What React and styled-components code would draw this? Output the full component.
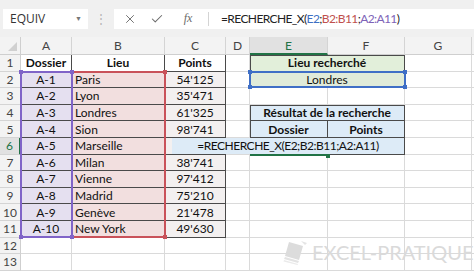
import React from 'react';
import styled, { createGlobalStyle } from 'styled-components';
import { X, Check } from 'lucide-react';

const GlobalStyle = createGlobalStyle`
  html, body { margin: 0; padding: 0; background: #fff; }
  body { width: 474px; height: 273px; overflow: hidden; font-family: Lato, "Liberation Sans", sans-serif; }
`;

const LETTERS = ['A', 'B', 'C', 'D', 'E', 'F', 'G', 'H'];
const ROWS = 13;
const DARK = '#4a4a4a';
const GRID = '#dadada';

const people = [
  ['A-1', 'Paris', "54'125"],
  ['A-2', 'Lyon', "35'471"],
  ['A-3', 'Londres', "61'325"],
  ['A-4', 'Sion', "98'741"],
  ['A-5', 'Marseille', ''],
  ['A-6', 'Milan', "38'741"],
  ['A-7', 'Vienne', "97'412"],
  ['A-8', 'Madrid', "75'210"],
  ['A-9', 'Genève', "21'478"],
  ['A-10', 'New York', "49'630"],
];

const Page = styled.div`
  position: relative;
  width: 474px;
  height: 273px;
  overflow: hidden;
`;

const Toolbar = styled.div`
  display: flex;
  align-items: center;
  height: 37px;
  padding-left: 3px;
  background: #f0f0f0;
  box-sizing: border-box;
`;

const NameBox = styled.div`
  display: flex;
  align-items: center;
  justify-content: space-between;
  width: 85px;
  height: 20px;
  padding: 0 6px 0 7px;
  box-sizing: border-box;
  background: #fff;
  font-family: "Open Sans", "Liberation Sans", sans-serif;
  font-size: 12px;
  color: #333;
`;

const Caret = styled.span`
  font-size: 7px;
  color: #777;
`;

const Dots = styled.div`
  width: 26px;
  text-align: center;
  color: #b5b5b5;
  font-size: 12px;
`;

const FormulaBox = styled.div`
  flex: 1;
  display: flex;
  align-items: center;
  height: 20px;
  background: #fff;
`;

const IconSlot = styled.div`
  width: ${p => p.$w}px;
  display: flex;
  justify-content: center;
  align-items: center;
  color: #6b6b6b;
`;

const Fx = styled.span`
  font-family: "Liberation Serif", serif;
  font-style: italic;
  font-size: 12px;
  color: #6b6b6b;
`;

const Divider = styled.div`
  width: 1px;
  height: 14px;
  background: #d4d4d4;
  margin: 0 12px 0 0;
`;

const Formula = styled.div`
  font-size: 12px;
  letter-spacing: -0.6px;
  color: #222;
  white-space: nowrap;
`;

const Ref = styled.span`
  color: ${p => p.$c};
`;

const Sheet = styled.div`
  display: grid;
  grid-template-columns: 21px 51px 93px 61px 24px 78px 77px 67px 10px;
  grid-template-rows: 18px repeat(${ROWS}, 16.6px);
  background: #fff;
`;

const Corner = styled.div`
  grid-row: 1;
  grid-column: 1;
  background: #f3f3f3;
  border-right: 1px solid #cfcfcf;
  border-bottom: 1px solid #cfcfcf;
  box-sizing: border-box;
  position: relative;
  &::after {
    content: '';
    position: absolute;
    right: 3px;
    bottom: 3px;
    border-left: 9px solid transparent;
    border-bottom: 9px solid #d0d0d0;
  }
`;

const ColHead = styled.div`
  grid-row: 1;
  grid-column: ${p => p.$col};
  display: flex;
  align-items: center;
  justify-content: center;
  box-sizing: border-box;
  background: ${p => (p.$active ? '#e1e1e1' : '#f3f3f3')};
  color: ${p => (p.$active ? '#217346' : '#444')};
  border-right: 1px solid #d4d4d4;
  border-bottom: ${p => (p.$active ? '2px solid #217346' : '1px solid #cfcfcf')};
  font-size: 12px;
`;

const RowHead = styled.div`
  grid-row: ${p => p.$row};
  grid-column: 1;
  display: flex;
  align-items: center;
  justify-content: center;
  box-sizing: border-box;
  background: ${p => (p.$active ? '#e1e1e1' : '#f3f3f3')};
  color: ${p => (p.$active ? '#217346' : '#444')};
  border-right: ${p => (p.$active ? '2px solid #217346' : '1px solid #cfcfcf')};
  border-bottom: 1px solid #d4d4d4;
  font-size: 12px;
`;

const Cell = styled.div`
  grid-row: ${p => p.$row};
  grid-column: ${p => p.$col} / span ${p => p.$span || 1};
  display: flex;
  align-items: center;
  justify-content: ${p => (p.$align === 'left' ? 'flex-start' : 'center')};
  padding: 0 3px;
  box-sizing: border-box;
  background: ${p => p.$bg || '#fff'};
  border-right: 1px solid ${p => (p.$dark ? DARK : GRID)};
  border-bottom: 1px solid ${p => (p.$dark ? DARK : GRID)};
  box-shadow: ${p =>
    [p.$top && `inset 0 1px 0 ${DARK}`, p.$left && `inset 1px 0 0 ${DARK}`].filter(Boolean).join(', ') || 'none'};
  font-size: 12px;
  font-weight: ${p => (p.$bold ? 700 : 400)};
  color: #111;
  white-space: nowrap;
  overflow: hidden;
`;

const Range = styled.div`
  grid-row: ${p => p.$rows};
  grid-column: ${p => p.$cols};
  position: relative;
  z-index: 2;
  margin: -1px -1px 0 -1px;
  border: 2px solid ${p => p.$color};
  pointer-events: none;
`;

const Handle = styled.span`
  position: absolute;
  width: 4px;
  height: 4px;
  background: ${p => p.$color};
  ${p => (p.$x === 'l' ? 'left: -3px;' : 'right: -3px;')}
  ${p => (p.$y === 't' ? 'top: -3px;' : 'bottom: -3px;')}
`;

const Editor = styled.div`
  grid-row: 7;
  grid-column: 4 / 8;
  z-index: 3;
  margin: 0 1px 1px 7px;
  display: flex;
  align-items: center;
  justify-content: center;
  background: #ddebf7;
  font-size: 12px;
  letter-spacing: -0.5px;
  color: #111;
  white-space: nowrap;
`;

const ActiveCell = styled.div`
  grid-row: 7;
  grid-column: 6;
  z-index: 4;
  position: relative;
  border-bottom: 2px solid #217346;
  margin-bottom: -1px;
  &::after {
    content: '';
    position: absolute;
    right: -2px;
    bottom: -4px;
    width: 4px;
    height: 4px;
    background: #217346;
  }
`;

const Watermark = styled.div`
  position: absolute;
  left: 283px;
  top: 239px;
  display: flex;
  align-items: center;
  gap: 3px;
  color: #dadada;
  font-size: 20px;
  white-space: nowrap;
  z-index: 5;
`;

const LAV = '#e5e0f0';
const PINK = '#f2dfdf';
const GREY = '#f3f0f0';
const GREEN = '#e2efda';
const BLUE = '#ddebf7';

function spec(r, c) {
  const L = LETTERS[c];
  if (r === 1 && c < 3) return { text: ['Dossier', 'Lieu', 'Points'][c], bold: true, dark: true };
  if (r >= 2 && r <= 11 && c < 3) {
    const p = people[r - 2];
    if (c === 0) return { text: p[0], bg: LAV, dark: true };
    if (c === 1) return { text: p[1], bg: PINK, dark: true, align: 'left' };
    return { text: p[2], bg: GREY, dark: true };
  }
  if (L === 'E' && r === 1) return { text: 'Lieu recherché', bold: true, bg: GREEN, dark: true, top: true, left: true, span: 2 };
  if (L === 'E' && r === 2) return { text: 'Londres', bg: '#e0ebd9', dark: true, left: true, span: 2 };
  if (L === 'E' && r === 4) return { text: 'Résultat de la recherche', bold: true, bg: BLUE, dark: true, top: true, left: true, span: 2 };
  if (L === 'E' && r === 5) return { text: 'Dossier', bold: true, bg: BLUE, dark: true, left: true };
  if (L === 'F' && r === 5) return { text: 'Points', bold: true, bg: BLUE, dark: true };
  if (L === 'E' && r === 6) return { bg: BLUE, dark: true, left: true };
  if (L === 'F' && r === 6) return { bg: BLUE, dark: true };
  if (L === 'F' && [1, 2, 4].includes(r)) return { skip: true };
  return {};
}

function Logo() {
  return (
    <svg width="26" height="26" viewBox="0 0 26 26">
      <g fill="#dcdcdc">
        <polygon points="6,3 20,7 16,21 2,17" />
        <polygon points="2,18 16,22 15,24 1,20" opacity="0.8" />
        <polygon points="1,21 15,25 14.5,26 0.5,22.5" opacity="0.6" />
      </g>
      <polygon points="18,2 24,4 22,6" fill="#e4e4e4" />
    </svg>
  );
}

export default function App() {
  const cells = [];
  for (let r = 1; r <= ROWS; r++) {
    cells.push(
      <RowHead key={`h${r}`} $row={r + 1} $active={r === 6}>
        {r}
      </RowHead>
    );
    for (let c = 0; c < LETTERS.length; c++) {
      const s = spec(r, c);
      if (s.skip) continue;
      cells.push(
        <Cell
          key={`${LETTERS[c]}${r}`}
          $row={r + 1}
          $col={c + 2}
          $span={s.span}
          $bg={s.bg}
          $bold={s.bold}
          $align={s.align}
          $dark={s.dark}
          $top={s.top}
          $left={s.left}
        >
          {s.text}
        </Cell>
      );
    }
  }

  const corners = color =>
    ['lt', 'rt', 'lb', 'rb'].map(k => <Handle key={k} $color={color} $x={k[0]} $y={k[1]} />);

  return (
    <Page>
      <GlobalStyle />
      <Toolbar>
        <NameBox>
          EQUIV
          <Caret>▼</Caret>
        </NameBox>
        <Dots>⋮</Dots>
        <FormulaBox>
          <IconSlot $w={32}>
            <X size={14} strokeWidth={1.6} />
          </IconSlot>
          <IconSlot $w={22}>
            <Check size={14} strokeWidth={1.8} />
          </IconSlot>
          <IconSlot $w={40}>
            <Fx>fx</Fx>
          </IconSlot>
          <Divider />
          <Formula>
            =RECHERCHE_X(<Ref $c="#3d6fc4">E2</Ref>;<Ref $c="#c0504d">B2:B11</Ref>;<Ref $c="#7e63b8">A2:A11</Ref>)
          </Formula>
        </FormulaBox>
      </Toolbar>

      <Sheet>
        <Corner />
        {LETTERS.map((l, i) => (
          <ColHead key={l} $col={i + 2} $active={l === 'E'}>
            {l === 'H' ? '' : l}
          </ColHead>
        ))}
        {cells}
        <Range $rows="3 / 13" $cols="3" $color="#c9525a">{corners('#c9525a')}</Range>
        <Range $rows="3 / 13" $cols="2" $color="#8064c8">{corners('#8064c8')}</Range>
        <Range $rows="3" $cols="6 / 8" $color="#3f6fc6">{corners('#3f6fc6')}</Range>
        <Editor>=RECHERCHE_X(E2;B2:B11;A2:A11)</Editor>
        <ActiveCell />
      </Sheet>

      <Watermark>
        <Logo />
        EXCEL-PRATIQUE
      </Watermark>
    </Page>
  );
}
